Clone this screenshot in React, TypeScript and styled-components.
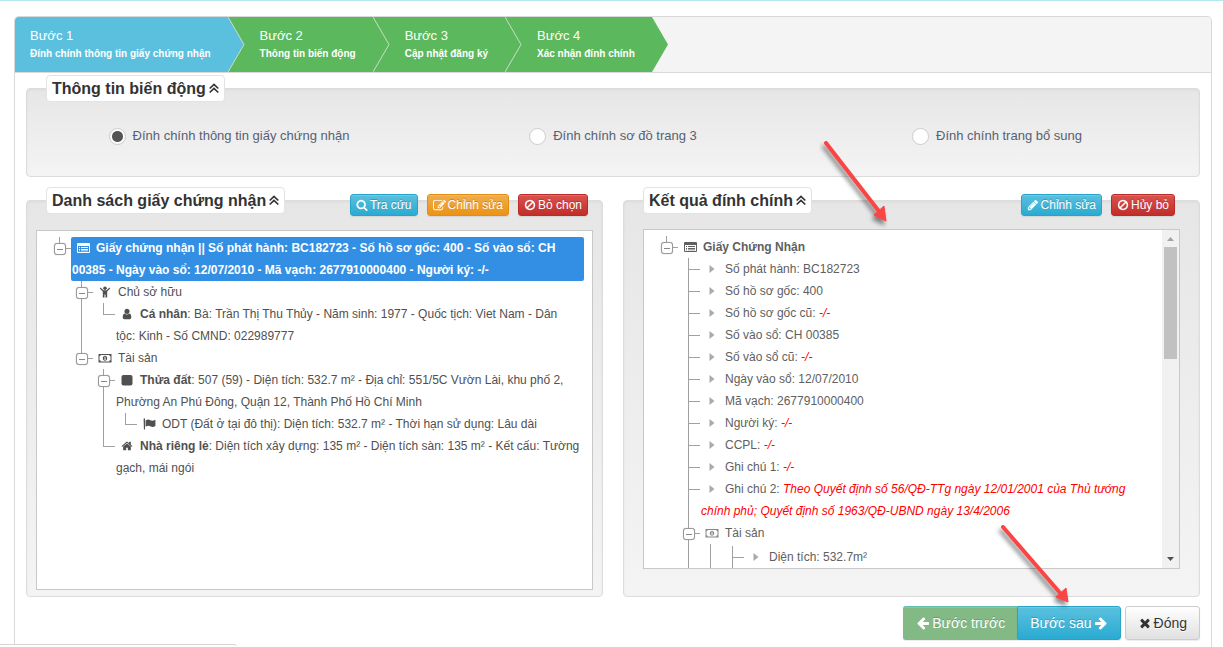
import React, { useState } from "react";
import styled, { createGlobalStyle, css } from "styled-components";

const GlobalStyle = createGlobalStyle`
  *, *::before, *::after { box-sizing: border-box; }
  body {
    margin: 0;
    background: #fff;
    color: #555;
    font: 12px/22px "Liberation Sans", Arial, sans-serif;
  }
  button, input { font-family: inherit; }
`;

/* ---------- icons ---------- */

const paths = {
  arrowLeft:
    "M1664 896v128q0 53-32.5 90.5t-84.5 37.5h-704l293 294q38 36 38 90t-38 90l-75 76q-37 37-90 37-52 0-91-37l-651-652q-37-37-37-90 0-52 37-91l651-650q38-38 91-38 52 0 90 38l75 74q38 38 38 91t-38 91l-293 293h704q52 0 84.5 37.5t32.5 90.5z",
  arrowRight:
    "M1600 960q0 54-37 91l-651 651q-39 37-91 37-51 0-90-37l-75-75q-38-38-38-91t38-91l293-293h-704q-52 0-84.5-37.5t-32.5-90.5v-128q0-53 32.5-90.5t84.5-37.5h704l-293-294q-38-36-38-90t38-90l75-75q38-38 90-38 53 0 91 38l651 651q37 35 37 90z",
  times:
    "M1490 1322q0 40-28 68l-136 136q-28 28-68 28t-68-28l-294-294-294 294q-28 28-68 28t-68-28l-136-136q-28-28-28-68t28-68l294-294-294-294q-28-28-28-68t28-68l136-136q28-28 68-28t68 28l294 294 294-294q28-28 68-28t68 28l136 136q28 28 28 68t-28 68l-294 294 294 294q28 28 28 68z",
  search:
    "M1216 832q0-185-131.5-316.5t-316.5-131.5-316.5 131.5-131.5 316.5 131.5 316.5 316.5 131.5 316.5-131.5 131.5-316.5zm512 832q0 52-38 90t-90 38q-54 0-90-38l-343-342q-179 124-399 124-143 0-273.5-55.5t-225-150-150-225-55.5-273.5 55.5-273.5 150-225 225-150 273.5-55.5 273.5 55.5 225 150 150 225 55.5 273.5q0 220-124 399l343 343q37 37 37 90z",
  ban:
    "M1440 893q0-161-87-295l-754 753q137 89 297 89 111 0 211.5-43.5t173.5-116.5 116-174.5 43-212.5zm-999 299l755-754q-135-91-300-91-148 0-273 73t-198 199-73 274q0 162 89 299zm1223-299q0 157-61 300t-163.5 246-245 164-298.5 61-298.5-61-245-164-163.5-246-61-300 61-299.5 163.5-245.5 245-164 298.5-61 298.5 61 245 164 163.5 245.5 61 299.5z",
  pencil:
    "M491 1536l91-91-235-235-91 91v107h128v128h107zm523-928q0-22-22-22-10 0-17 7l-542 542q-7 7-7 17 0 22 22 22 10 0 17-7l542-542q7-7 7-17zm-54-192l416 416-832 832h-416v-416zm683 96q0 53-37 90l-166 166-416-416 166-165q36-38 90-38 53 0 91 38l235 234q37 39 37 91z",
  edit:
    "M888 1184l116-116-152-152-116 116v56h96v96h56zm440-720q-16-16-33 1l-350 350q-17 17-1 33t33-1l350-350q17-17 1-33zm80 594v190q0 119-84.5 203.5t-203.5 84.5h-832q-119 0-203.5-84.5t-84.5-203.5v-832q0-119 84.5-203.5t203.5-84.5h832q63 0 117 25 15 7 18 23 3 17-9 29l-49 49q-14 14-32 8-23-6-45-6h-832q-66 0-113 47t-47 113v832q0 66 47 113t113 47h832q66 0 113-47t47-113v-126q0-13 9-22l64-64q15-15 35-7t20 29zm-96-738l288 288-672 672h-288v-288zm444 132l-92 92-288-288 92-92q28-28 68-28t68 28l152 152q28 28 28 68t-28 68z",
  user:
    "M1536 1399q0 109-62.5 187t-150.5 78h-854q-88 0-150.5-78t-62.5-187q0-85 8.5-160.5t31.5-152 58.5-131 94-89 134.5-34.5q131 128 313 128t313-128q76 0 134.5 34.5t94 89 58.5 131 31.5 152 8.5 160.5zm-256-887q0 159-112.5 271.5t-271.5 112.5-271.5-112.5-112.5-271.5 112.5-271.5 271.5-112.5 271.5 112.5 112.5 271.5z",
  home:
    "M1472 992v480q0 26-19 45t-45 19h-384v-384h-256v384h-384q-26 0-45-19t-19-45v-480q0-1 .5-3t.5-3l575-474 575 474q1 2 1 6zm223-69l-62 74q-8 9-21 11h-3q-13 0-21-7l-692-577-692 577q-12 8-24 7-13-2-21-11l-62-74q-8-10-7-23.5t11-21.5l719-599q32-26 76-26t76 26l244 204v-195q0-14 9-23t23-9h192q14 0 23 9t9 23v408l219 182q10 8 11 21.5t-7 23.5z",
};

const Glyph = styled.svg`
  flex: none;
  fill: currentColor;
`;

function Icon({ name, size = 12 }: { name: keyof typeof paths; size?: number }) {
  return (
    <Glyph width={size} height={size} viewBox="0 0 1792 1792" aria-hidden="true">
      <path d={paths[name]} />
    </Glyph>
  );
}

const CardIcon = () => (
  <Glyph width="13" height="12" viewBox="0 0 13 12" aria-hidden="true">
    <path d="M1 1h11a1 1 0 0 1 1 1v8a1 1 0 0 1-1 1H1a1 1 0 0 1-1-1V2a1 1 0 0 1 1-1zm0 3v6h11V4z" fillRule="evenodd" />
    <path d="M2 5h1v1H2zm2 0h7v1H4zM2 7h1v1H2zm2 0h7v1H4zM2 8.500h1v.800H2zm2 0h7v.800H4z" />
  </Glyph>
);

const ChildIcon = () => (
  <Glyph width="12" height="12" viewBox="0 0 12 12" aria-hidden="true">
    <circle cx="6" cy="2.200" r="1.800" />
    <path d="M1.600 1.600 4.300 4.300H7.700L10.400 1.600 11.200 2.400 8.200 5.400V11.500H6.500V8.500H5.500V11.500H3.800V5.400L.800 2.400z" />
  </Glyph>
);

const MoneyIcon = ({ faded }: { faded?: boolean }) => (
  <Glyph width="14" height="12" viewBox="0 0 14 12" opacity={faded ? 0.75 : 1} aria-hidden="true">
    <path d="M.500 2h13v8.500H.500zm1 2.200v4.100c.700 0 1.200.500 1.200 1.200h8.600c0-.700.500-1.200 1.200-1.200V4.200c-.700 0-1.200-.500-1.200-1.200H2.700c0 .700-.500 1.200-1.200 1.200z" fillRule="evenodd" />
    <path d="M7 3.700c1.400 0 2.200 1.200 2.200 2.500S8.400 8.800 7 8.800 4.800 7.500 4.800 6.200 5.600 3.700 7 3.700zm-.900 1.400.500.400v1.700h-.500v.600h1.900v-.600h-.500V4.700h-.700z" fillRule="evenodd" />
  </Glyph>
);

const SquareIcon = () => (
  <Glyph width="12" height="12" viewBox="0 0 12 12" aria-hidden="true">
    <rect x="0.500" y="1" width="11" height="10.500" rx="2" />
  </Glyph>
);

const FlagIcon = () => (
  <Glyph width="13" height="12" viewBox="0 0 13 12" aria-hidden="true">
    <path d="M.600 1a.700.700 0 0 1 1.400 0v10.500H.900zM2.600 2.500C5 1 6 1.600 7.400 2.300 9 3 10.600 2.600 12.400 1.800V8C10.600 9 9.300 9.200 7.800 8.500 6 7.600 4.600 7.600 2.600 8.700z" />
  </Glyph>
);

const CaretIcon = () => (
  <Glyph width="14" height="12" viewBox="0 0 14 12" aria-hidden="true">
    <path d="M4.500 2 9.500 6 4.500 10z" fill="#aaa" />
  </Glyph>
);

const DoubleUpIcon = () => (
  <svg width="10" height="11" viewBox="0 0 10 11" fill="none" stroke="currentColor" strokeWidth="1.700" aria-hidden="true">
    <path d="M.700 5.500 5 1.500 9.300 5.500M.700 9.500 5 5.500 9.300 9.500" />
  </svg>
);

/* ---------- page frame ---------- */

const Page = styled.div`
  display: flex;
  flex-direction: column;
  min-height: 100vh;
  padding: 15px 11px 0 14px;
  border-top: 1px solid #b5e7ee;
`;

const Wizard = styled.main`
  position: relative;
  flex: 1;
  border: 1px solid #d9d9d9;
  border-bottom: 0;
  border-radius: 5px 5px 0 0;
`;

const Content = styled.div`
  padding: 15px 11px 7px;
`;

/* ---------- steps ---------- */

const Steps = styled.ol`
  display: flex;
  height: 56px;
  margin: 0;
  padding: 0;
  overflow: hidden;
  list-style: none;
  background: #f4f4f4;
  border-bottom: 1px solid #d9d9d9;
  border-radius: 4px 4px 0 0;
`;

const StepItem = styled.li<{ $active?: boolean; $color: string }>`
  position: relative;
  padding: 10px 17px 0 ${(p) => (p.$active ? 15 : 32)}px;
  background: ${(p) => p.$color};
  color: #fff;
`;

const StepTitle = styled.div`
  font-size: 13px;
  line-height: 18px;
`;

const StepText = styled.div`
  font-size: 10px;
  font-weight: bold;
  line-height: 18px;
  white-space: nowrap;
`;

const StepPoint = styled.svg`
  position: absolute;
  z-index: 1;
  top: 0;
  left: 100%;
`;

function Step({ title, text, active, last }: { title: string; text: string; active?: boolean; last?: boolean }) {
  const color = active ? "#5bc0de" : "#5cb85c";
  return (
    <StepItem $active={active} $color={color} aria-current={active ? "step" : undefined}>
      <StepTitle>{title}</StepTitle>
      <StepText>{text}</StepText>
      <StepPoint width="17" height="55" viewBox="0 0 17 55" aria-hidden="true">
        <path d="M0 0 16 27.500 0 55z" fill={color} />
        {!last && <path d="M0 0 16 27.500 0 55" fill="none" stroke="#c9dcc9" />}
      </StepPoint>
    </StepItem>
  );
}

/* ---------- panels ---------- */

const Panel = styled.section`
  min-width: 0;
  border: 1px solid #dcdcdc;
  border-radius: 4px;
  background: linear-gradient(to bottom, #e6e6e6, #f4f4f4);
  box-shadow: inset 0 1px 3px rgba(0, 0, 0, 0.05);
`;

const PanelHead = styled.div<{ $wide?: boolean }>`
  display: flex;
  justify-content: space-between;
  height: 29px;
  margin-top: -14px;
  padding: 0 ${(p) => (p.$wide ? 24 : 14)}px 0 19px;
`;

const Legend = styled.h2`
  margin: 0;
`;

const LegendButton = styled.button`
  display: flex;
  align-items: center;
  gap: 3px;
  height: 27px;
  padding: 0 5px;
  border: 1px solid #e3e3e3;
  border-radius: 4px;
  background: #fff;
  color: #333;
  font-size: 16px;
  font-weight: bold;
  line-height: 20px;
`;

const Actions = styled.div`
  display: flex;
  align-items: flex-end;
  gap: 9px;
`;

const Columns = styled.div`
  display: grid;
  grid-template-columns: repeat(2, minmax(0, 1fr));
  gap: 20px;
  margin-top: 23px;
`;

/* ---------- buttons ---------- */

const tones = {
  info: css`
    background: linear-gradient(to bottom, #5bc0de, #2aabd2);
    border-color: #28a4c9;
    color: #fff;
  `,
  warning: css`
    background: linear-gradient(to bottom, #f0ad4e, #eb9316);
    border-color: #e38d13;
    color: #fff;
  `,
  danger: css`
    background: linear-gradient(to bottom, #d9534f, #c12e2a);
    border-color: #b92c28;
    color: #fff;
  `,
  muted: css`
    background: #82b985;
    border-color: #65bfb0;
    color: #fff;
  `,
  plain: css`
    background: linear-gradient(to bottom, #fff, #e0e0e0);
    border-color: #ccc;
    color: #333;
    text-shadow: 0 1px 0 #fff;
  `,
};

const Button = styled.button<{ $tone: keyof typeof tones; $large?: boolean }>`
  display: flex;
  align-items: center;
  gap: 2px;
  height: ${(p) => (p.$large ? 34 : 22)}px;
  padding: 0 ${(p) => (p.$large ? 12 : 5)}px;
  border: 1px solid;
  border-radius: 3px;
  font-size: ${(p) => (p.$large ? 14 : 12)}px;
  line-height: 20px;
  white-space: nowrap;
  text-shadow: 0 -1px 0 rgba(0, 0, 0, 0.2);
  box-shadow: inset 0 1px 0 rgba(255, 255, 255, 0.15), 0 1px 1px rgba(0, 0, 0, 0.08);
  ${(p) => tones[p.$tone]}
`;

const Footer = styled.footer`
  display: flex;
  justify-content: flex-end;
  gap: 4px;
  margin-top: 9px;
`;

const ButtonGroup = styled.div`
  display: flex;
  button:first-child { border-radius: 3px 0 0 3px; border-right: 0; }
  button:last-child { border-radius: 0 3px 3px 0; }
`;

/* ---------- radios ---------- */

const RadioRow = styled.div`
  display: grid;
  grid-template-columns: repeat(3, 1fr);
  justify-items: center;
  padding: 23px 10px 31px;
`;

const RadioLabel = styled.label`
  display: flex;
  align-items: center;
  gap: 7px;
  height: 18px;
  color: #576075;
  font-size: 13px;
  line-height: 18px;
`;

const Radio = styled.input`
  appearance: none;
  width: 17px;
  height: 17px;
  margin: 0;
  border: 1px solid #ccc;
  border-radius: 50%;
  background: #fff;
  &:checked {
    background: radial-gradient(circle, #555 5px, #fff 6px);
  }
`;

/* ---------- tree ---------- */

const TreeBox = styled.div<{ $height: number; $soft?: boolean }>`
  display: flex;
  height: ${(p) => p.$height}px;
  border: 1px solid #c8c8c8;
  background: #fff;
  color: ${(p) => (p.$soft ? "#606060" : "#505050")};
`;

const LeftBody = styled.div`
  padding: 14px 9px 6px;
`;

const RightBody = styled.div`
  padding: 13px 19px 0;
`;

const TreeScroll = styled.div`
  flex: 1;
  min-width: 0;
  padding: 6px 8px 0 12px;
  overflow-y: auto;
  scrollbar-width: none;
`;

const List = styled.ul<{ $spaced?: boolean }>`
  margin: 0;
  padding: ${(p) => (p.$spaced ? 2 : 0)}px 0 0;
  list-style: none;
`;

const stub = "linear-gradient(#a0a0a0, #a0a0a0) 10px 11px / 12px 1px no-repeat";

const Item = styled.li<{ $continues?: boolean; $bare?: boolean }>`
  display: grid;
  grid-template-columns: 22px minmax(0, 1fr);
  background: ${(p) => (p.$bare ? "" : stub + ",")}
    linear-gradient(#a0a0a0, #a0a0a0) 10px 0 / 1px 100% no-repeat;
  ${(p) =>
    !p.$continues &&
    css`
      &:last-child {
        background: ${stub}, linear-gradient(#a0a0a0, #a0a0a0) 10px 0 / 1px 11px no-repeat;
      }
    `}
`;

const Toggle = styled.button`
  display: flex;
  align-items: center;
  justify-content: center;
  width: 12px;
  height: 12px;
  margin: 6px 0 0 5px;
  padding: 0;
  border: 1px solid #999;
  border-radius: 3px;
  background: #fff;
  box-shadow: 0 0 1px #999;
  &::before {
    content: "";
    width: 6px;
    height: 1px;
    background: #888;
  }
`;

const Label = styled.div<{ $selected?: boolean }>`
  padding: 0 1px;
  border-radius: 2px;
  ${(p) =>
    p.$selected &&
    css`
      background: #338fe3;
      color: #fff;
      font-weight: bold;
    `}
`;

const IconSlot = styled.span`
  display: inline-flex;
  justify-content: center;
  width: 14px;
  margin: 0 6px 0 4px;
  vertical-align: -2px;
`;

const Changed = styled.em`
  color: #f00;
`;

type NodeProps = {
  icon?: React.ReactNode;
  label?: React.ReactNode;
  toggle?: boolean;
  selected?: boolean;
  continues?: boolean;
  spaced?: boolean;
  children?: React.ReactNode;
};

function TreeNode({ icon, label, toggle, selected, continues, spaced, children }: NodeProps) {
  return (
    <Item $continues={continues} $bare={!label}>
      <div>{toggle && <Toggle type="button" aria-label="Thu gọn" />}</div>
      <div>
        {label && (
          <Label $selected={selected}>
            <IconSlot>{icon}</IconSlot>
            {label}
          </Label>
        )}
        {children && <List $spaced={spaced}>{children}</List>}
      </div>
    </Item>
  );
}

/* ---------- scrollbar ---------- */

const ScrollBar = styled.div`
  display: flex;
  flex: none;
  flex-direction: column;
  justify-content: space-between;
  align-items: center;
  width: 17px;
  background: #f1f1f1;
`;

const ScrollEnd = styled.div`
  display: flex;
  flex-direction: column;
  align-items: center;
`;

const Thumb = styled.div`
  width: 13px;
  height: 112px;
  background: #c1c1c1;
`;

/* ---------- overlays ---------- */

const Pointer = styled.svg<{ $top: number; $right: number }>`
  position: absolute;
  z-index: 2;
  top: ${(p) => p.$top}px;
  right: ${(p) => p.$right}px;
  pointer-events: none;
  filter: drop-shadow(-2px 4px 2px rgba(0, 0, 0, 0.45));
`;

const StatusBubble = styled.div`
  position: fixed;
  bottom: 0;
  left: 0;
  width: 237px;
  height: 3px;
  border-top: 1px solid #d5d5d5;
  border-radius: 0 4px 0 0;
  background: #fff;
`;

const choices = [
  "Đính chính thông tin giấy chứng nhận",
  "Đính chính sơ đồ trang 3",
  "Đính chính trang bổ sung",
];

const fields: [string, string | null][] = [
  ["Số phát hành: BC182723", null],
  ["Số hồ sơ gốc: 400", null],
  ["Số hồ sơ gốc cũ: ", "-/-"],
  ["Số vào sổ: CH 00385", null],
  ["Số vào sổ cũ: ", "-/-"],
  ["Ngày vào sổ: 12/07/2010", null],
  ["Mã vạch: 2677910000400", null],
  ["Người ký: ", "-/-"],
  ["CCPL: ", "-/-"],
  ["Ghi chú 1: ", "-/-"],
  [
    "Ghi chú 2: ",
    "Theo Quyết định số 56/QĐ-TTg ngày 12/01/2001 của Thủ tướng chính phủ; Quyết định số 1963/QĐ-UBND ngày 13/4/2006",
  ],
];

function PanelLegend({ id, children }: { id?: string; children: React.ReactNode }) {
  return (
    <Legend id={id}>
      <LegendButton type="button">
        {children}
        <DoubleUpIcon />
      </LegendButton>
    </Legend>
  );
}

export default function App() {
  const [choice, setChoice] = useState(0);
  return (
    <Page>
      <GlobalStyle />
      <Wizard>
        <Steps>
          <Step active title="Bước 1" text="Đính chính thông tin giấy chứng nhận" />
          <Step title="Bước 2" text="Thông tin biến động" />
          <Step title="Bước 3" text="Cập nhật đăng ký" />
          <Step last title="Bước 4" text="Xác nhận đính chính" />
        </Steps>
        <Content>
          <Panel>
            <PanelHead>
              <PanelLegend id="change-info">Thông tin biến động</PanelLegend>
            </PanelHead>
            <RadioRow role="radiogroup" aria-labelledby="change-info">
              {choices.map((text, i) => (
                <RadioLabel key={text}>
                  <Radio type="radio" name="choice" checked={choice === i} onChange={() => setChoice(i)} />
                  {text}
                </RadioLabel>
              ))}
            </RadioRow>
          </Panel>

          <Columns>
            <Panel>
              <PanelHead>
                <PanelLegend>Danh sách giấy chứng nhận</PanelLegend>
                <Actions>
                  <Button type="button" $tone="info"><Icon name="search" />Tra cứu</Button>
                  <Button type="button" $tone="warning"><Icon name="edit" size={13} />Chỉnh sửa</Button>
                  <Button type="button" $tone="danger"><Icon name="ban" />Bỏ chọn</Button>
                </Actions>
              </PanelHead>
              <LeftBody>
                <TreeBox $height={360}>
                  <TreeScroll>
                    <List>
                      <TreeNode
                        toggle
                        selected
                        icon={<CardIcon />}
                        label="Giấy chứng nhận || Số phát hành: BC182723 - Số hồ sơ gốc: 400 - Số vào sổ: CH 00385 - Ngày vào sổ: 12/07/2010 - Mã vạch: 2677910000400 - Người ký: -/-"
                      >
                        <TreeNode toggle icon={<ChildIcon />} label="Chủ sở hữu">
                          <TreeNode
                            icon={<Icon name="user" />}
                            label={<><b>Cá nhân</b>: Bà: Trần Thị Thu Thủy - Năm sinh: 1977 - Quốc tịch: Viet Nam - Dân tộc:{"\u00a0"}Kinh - Số CMND: 022989777</>}
                          />
                        </TreeNode>
                        <TreeNode toggle icon={<MoneyIcon />} label="Tài sản">
                          <TreeNode
                            toggle
                            icon={<SquareIcon />}
                            label={<><b>Thửa đất</b>: 507 (59) - Diện tích: 532.7 m² - Địa chỉ: 551/5C Vườn Lài, khu phố 2, Phường An Phú Đông, Quận 12, Thành Phố Hồ Chí Minh</>}
                          >
                            <TreeNode
                              icon={<FlagIcon />}
                              label="ODT (Đất ở tại đô thị): Diện tích: 532.7 m² - Thời hạn sử dụng: Lâu dài"
                            />
                          </TreeNode>
                          <TreeNode
                            icon={<Icon name="home" />}
                            label={<><b>Nhà riêng lẻ</b>: Diện tích xây dựng: 135 m² - Diện tích sàn: 135 m² - Kết cấu: Tường gạch, mái ngói</>}
                          />
                        </TreeNode>
                      </TreeNode>
                    </List>
                  </TreeScroll>
                </TreeBox>
              </LeftBody>
            </Panel>

            <Panel>
              <PanelHead $wide>
                <PanelLegend>Kết quả đính chính</PanelLegend>
                <Actions>
                  <Button type="button" $tone="info"><Icon name="pencil" />Chỉnh sửa</Button>
                  <Button type="button" $tone="danger"><Icon name="ban" />Hủy bỏ</Button>
                </Actions>
              </PanelHead>
              <RightBody>
                <TreeBox $height={340} $soft>
                  <TreeScroll>
                    <List>
                      <TreeNode toggle icon={<CardIcon />} label={<b>Giấy Chứng Nhận</b>}>
                        {fields.map(([text, value]) => (
                          <TreeNode
                            key={text}
                            icon={<CaretIcon />}
                            label={<>{text}{value && <Changed>{value}</Changed>}</>}
                          />
                        ))}
                        <TreeNode toggle continues icon={<MoneyIcon faded />} label="Tài sản">
                          <TreeNode continues spaced>
                            <TreeNode continues icon={<CaretIcon />} label="Diện tích: 532.7m²" />
                          </TreeNode>
                        </TreeNode>
                      </TreeNode>
                    </List>
                  </TreeScroll>
                  <ScrollBar aria-hidden="true">
                    <ScrollEnd>
                      <svg width="17" height="17" viewBox="0 0 17 17"><path d="M5 11 8.500 7 12 11z" fill="#a3a3a3" /></svg>
                      <Thumb />
                    </ScrollEnd>
                    <svg width="17" height="17" viewBox="0 0 17 17"><path d="M5 6 8.500 10 12 6z" fill="#505050" /></svg>
                  </ScrollBar>
                </TreeBox>
              </RightBody>
            </Panel>
          </Columns>

          <Footer>
            <ButtonGroup>
              <Button type="button" $large $tone="muted"><Icon name="arrowLeft" size={14} />Bước trước</Button>
              <Button type="button" $large $tone="info">Bước sau<Icon name="arrowRight" size={14} /></Button>
            </ButtonGroup>
            <Button type="button" $large $tone="plain"><Icon name="times" size={14} />Đóng</Button>
          </Footer>
        </Content>

        <Pointer $top={120} $right={320} width="70" height="90" viewBox="0 0 70 90" aria-hidden="true">
          <path d="M5 6 57 73" stroke="#fb4444" strokeWidth="4" strokeLinecap="round" />
          <path d="M65 84 53 78 63 69z" fill="#fb4444" stroke="#fb4444" />
        </Pointer>
        <Pointer $top={504} $right={138} width="75" height="90" viewBox="0 0 75 90" aria-hidden="true">
          <path d="M5 6 63 73" stroke="#fb4444" strokeWidth="4" strokeLinecap="round" />
          <path d="M70 81 58 76 68 67z" fill="#fb4444" stroke="#fb4444" />
        </Pointer>
      </Wizard>
      <StatusBubble />
    </Page>
  );
}
